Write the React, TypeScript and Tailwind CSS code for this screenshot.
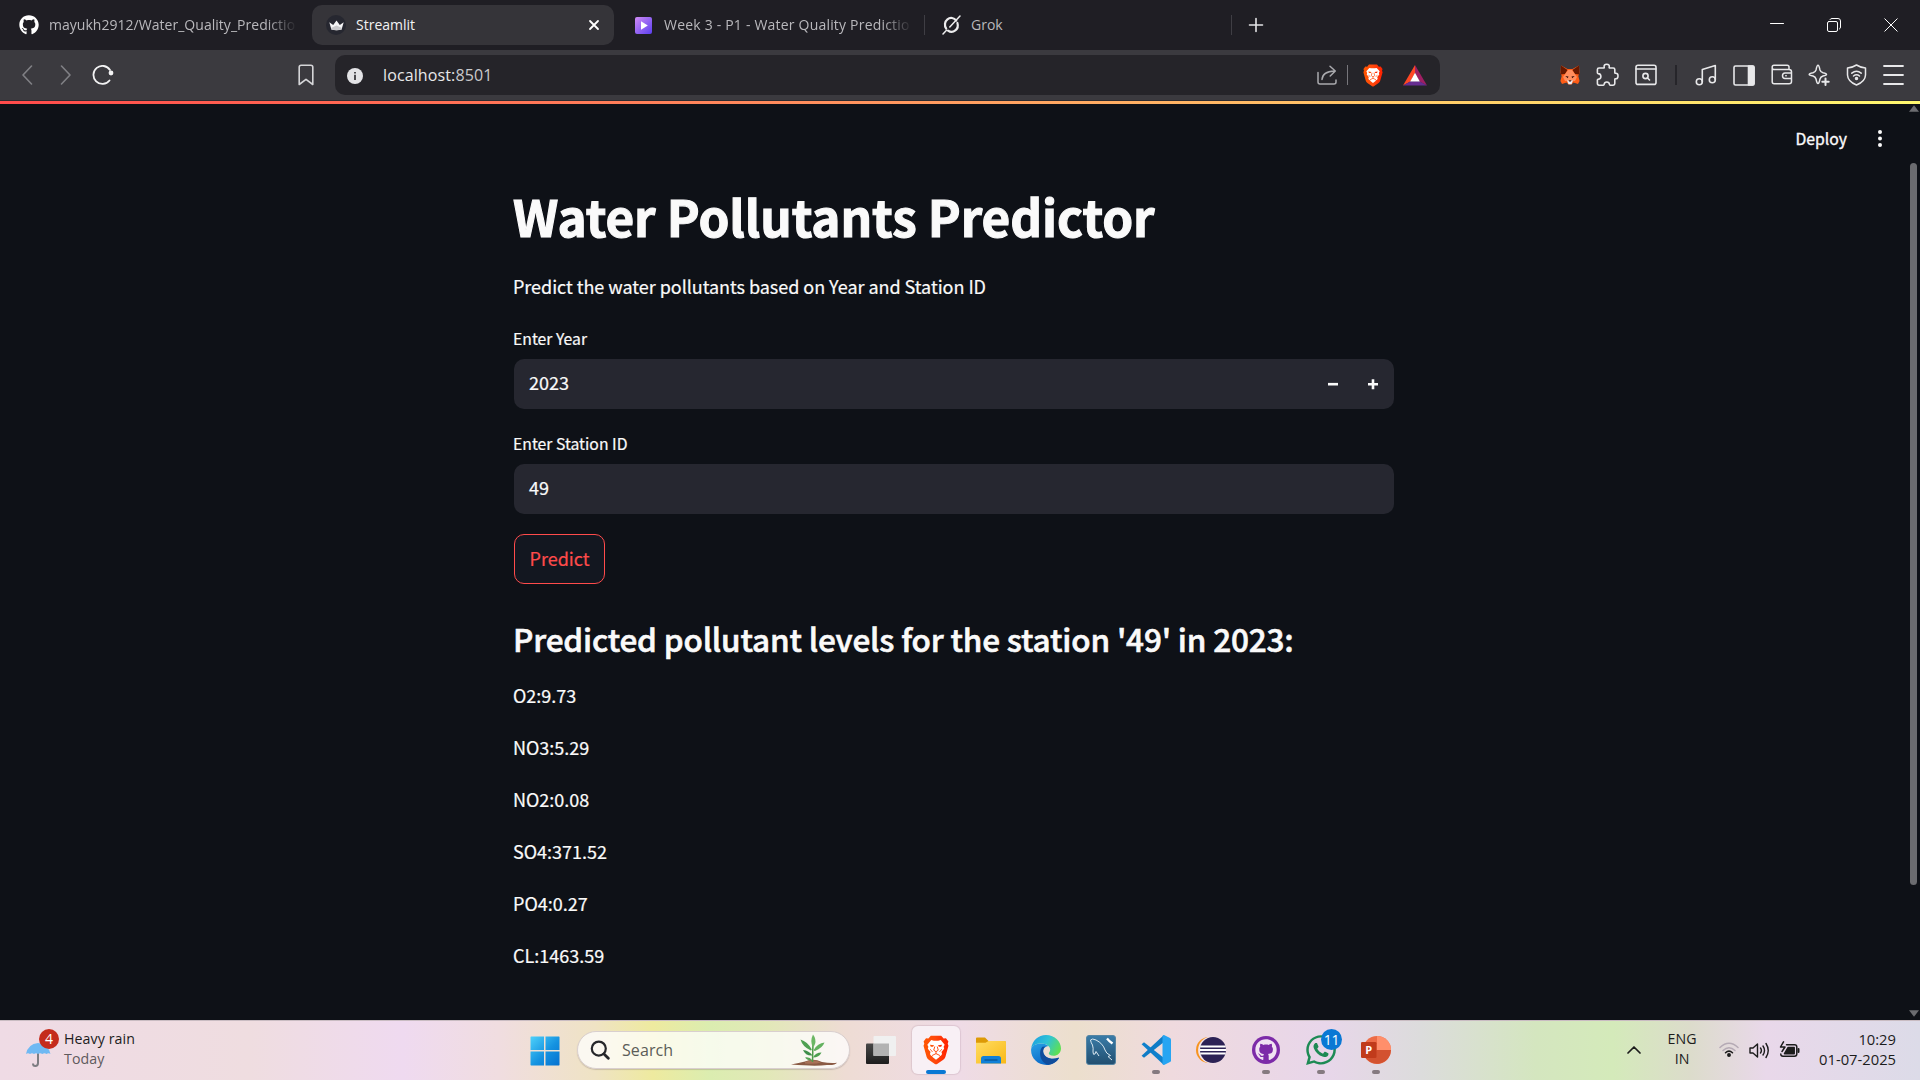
import React from "react";
import { FaGithub, FaWhatsapp } from "react-icons/fa";

const ui = "font-['Open_Sans','Noto_Sans',sans-serif]";

const Line = ({
  w = 24,
  h = 24,
  box,
  sw = 1.6,
  className = "",
  children,
}: {
  w?: number;
  h?: number;
  box?: string;
  sw?: number;
  className?: string;
  children: React.ReactNode;
}) => (
  <svg
    width={w}
    height={h}
    viewBox={box ?? `0 0 ${w} ${h}`}
    fill="none"
    stroke="currentColor"
    strokeWidth={sw}
    strokeLinecap="round"
    strokeLinejoin="round"
    className={`block shrink-0 ${className}`}
  >
    {children}
  </svg>
);

function TabStrip() {
  return (
    <div className={`flex h-[50px] items-center bg-[#1f1e24] text-[14px] text-[#b9b8bc] ${ui}`}>
      <div className="flex w-[312px] items-center pl-[19px]">
        <FaGithub className="size-[20px] shrink-0 text-white" />
        <div className="ml-[10px] w-[248px] whitespace-nowrap pb-[2px] tracking-[0.03px] [mask-image:linear-gradient(to_right,black_88%,transparent)]">
          mayukh2912/Water_Quality_Predictio
        </div>
      </div>
      <div className="flex h-10 w-[302px] items-center rounded-[10px] bg-[#353439] pl-[14px] pr-[13px] text-[#f2f2f3]">
        <div className="flex size-5 shrink-0 items-center justify-center rounded-full bg-[#262730]">
          <svg width="15" height="11" viewBox="0 0 15 11" className="block">
            <path d="M0.3 2.2 4.2 5 7.5 0.5 10.8 5 14.7 2.2 12.6 9.6Q7.5 11 2.4 9.6Z" fill="#f4f4f5" />
            <path d="M2 8 7.5 5.5 13 8 12.6 9.6Q7.5 11 2.4 9.6Z" fill="#c9c9cc" />
          </svg>
        </div>
        <div className="ml-[10px] flex-1 pb-[2px]">Streamlit</div>
        <Line w={14} h={14} sw={1.8} className="text-white">
          <path d="M3 3 11 11M11 3 3 11" />
        </Line>
      </div>
      <div className="flex w-[310px] items-center pl-[21px]">
        <svg width="17" height="17" viewBox="0 0 17 17" className="block shrink-0">
          <defs>
            <linearGradient id="play" x1="0" y1="0" x2="1" y2="1">
              <stop offset="0" stopColor="#d08bf5" />
              <stop offset="1" stopColor="#5b3ff0" />
            </linearGradient>
          </defs>
          <rect width="17" height="17" rx="2" fill="url(#play)" />
          <path d="M6 4.3 12.8 8.5 6 12.7Z" fill="#fff" />
        </svg>
        <div className="ml-[12px] w-[248px] whitespace-nowrap pb-[2px] tracking-[0.2px] [mask-image:linear-gradient(to_right,black_88%,transparent)]">
          Week 3 - P1 - Water Quality Predictio
        </div>
      </div>
      <div className="flex h-5 w-[308px] items-center border-x border-[#3f3e44] pl-[17px]">
        <Line w={19} h={20} sw={2.2} className="text-[#ececed]">
          <path d="M14.2 5.6A6.2 6.6 0 0 0 4.2 13.6M15.4 8A6.2 6.6 0 0 1 6 15.6" />
          <path d="M7.8 12 18 1M4.5 15.2 1 19" strokeWidth="1.5" />
        </Line>
        <span className="ml-[10px] pb-[2px]">Grok</span>
      </div>
      <Line w={16} h={16} className="ml-[16px] text-[#e4e4e6]">
        <path d="M8 1.5V14.5M1.5 8H14.5" />
      </Line>
      <div className="ml-auto flex items-center gap-[43px] pr-[22px] text-white">
        <Line w={14} h={14} sw={1}>
          <path d="M0.5 5.5H13.5" />
        </Line>
        <Line w={14} h={14} sw={1}>
          <rect x="0.5" y="3.5" width="10" height="10" rx="1.5" />
          <path d="M3 1.5Q3.5 .5 5 .5H11Q13.5 .5 13.5 3V9Q13.5 10.5 12.5 11" />
        </Line>
        <Line w={14} h={14} sw={1}>
          <path d="M0.8 0.8 13.2 13.2M13.2 0.8 0.8 13.2" />
        </Line>
      </div>
    </div>
  );
}

const MetaMask = () => (
  <svg width="20" height="20" viewBox="0 0 20 20" className="block shrink-0">
    <path d="M1 .5 7.5 4H12.5L19 .5 19.5 8 18.3 11 19.6 16 18 19 13.5 17.5 11.5 19.5H8.5L6.5 17.5 2 19 0.4 16 1.7 11 0.5 8Z" fill="#ff5c16" />
    <path d="M1 .5 7.5 5 5 9 0.5 9.5ZM19 .5 12.5 5 15 9 19.5 9.5Z" fill="#661800" />
    <path d="M5 9.2 8 5H12L15 9.2 17 12 15 16H5L3 12Z" fill="#ff8d5d" />
    <path d="M7 15.5 8.5 19.2H11.5L13 15.5Z" fill="#e9edf5" />
    <path d="M5.3 11 8.5 11.6 7.8 13.2ZM14.7 11 11.5 11.6 12.2 13.2ZM8.6 15.2H11.4L11 16.6H9Z" fill="#3b1008" />
  </svg>
);

const BraveLion = ({ className }: { className: string }) => (
  <svg viewBox="0 0 30 34" className={`block shrink-0 ${className}`}>
    <defs>
      <linearGradient id="lion" x1="0" y1="0" x2="1" y2="0">
        <stop offset="0" stopColor="#ff5500" />
        <stop offset="0.45" stopColor="#ff4a0c" />
        <stop offset="1" stopColor="#ff2000" />
      </linearGradient>
    </defs>
    <path d="M9 0.5H21L23.8 3.7 26.5 3.4 29.3 7.2 28.5 9.8 29.4 12 25.8 25 Q25.2 27 23.4 28.2L16.3 33.1Q15 34 13.7 33.1L6.6 28.2Q4.8 27 4.2 25L.6 12 1.5 9.8.7 7.2 3.5 3.4 6.2 3.7Z" fill="url(#lion)" />
    <path d="M9.5 5.6 12.5 6.3H17.5L20.5 5.6 25 10.8 23.8 13.2 24.4 15.5 21.3 19.3 22 21.7 20.5 24 18.8 23.4 19.4 24.8 15 28.2 10.6 24.8 11.2 23.4 9.5 24 8 21.7 8.7 19.3 5.6 15.5 6.2 13.2 5 10.8Z" fill="#fff" />
    <path d="M8 11 12.8 11.6 11.6 13.2 9 13.2ZM22 11 17.2 11.6 18.4 13.2 21 13.2Z" fill="url(#lion)" />
    <path d="M13.6 13 12.4 17.2 15 19 17.6 17.2 16.4 13" fill="none" stroke="#ff4a0c" strokeWidth="1.1" />
    <path d="M15 19V21.3M10.6 23.3 15 21.2 19.4 23.3" fill="none" stroke="#ff4a0c" strokeWidth="1.1" />
    <path d="M8.3 16 11 19.3M21.7 16 19 19.3" fill="none" stroke="#ff4a0c" strokeWidth="0.9" />
  </svg>
);

function Toolbar() {
  return (
    <div className="flex h-[51px] items-center border-b border-[#2d2c31] bg-[#3b3a3f] text-[#e8e8ea]">
      <Line w={12} h={20} className="ml-[21px] text-[#808085]">
        <path d="M10.5 1 2 10 10.5 19" />
      </Line>
      <Line w={12} h={20} className="ml-[27px] text-[#808085]">
        <path d="M1.5 1 10 10 1.5 19" />
      </Line>
      <Line w={22} h={20} sw={1.8} className="ml-[20px] text-[#f2f2f3]">
        <path d="M17.5 15.5A9 9 0 1 1 18 5" />
        <circle cx="19" cy="8" r="2.4" fill="currentColor" stroke="none" />
      </Line>
      <Line w={16} h={22} className="ml-[184px] text-[#d5d5d8]">
        <path d="M1.2 3.2Q1.2 1.2 3.2 1.2H12.8Q14.8 1.2 14.8 3.2V20.5L8 15.3 1.2 20.5Z" />
      </Line>
      <div className="ml-[21px] flex h-10 w-[1105px] items-center rounded-[10px] bg-[#252429] pl-[12px] pr-[13px]">
        <div className="mt-px flex size-4 items-center justify-center rounded-full bg-[#e3e3e6]">
          <svg width="16" height="16" viewBox="0 0 16 16">
            <path d="M7.2 6.8H8.8V12H7.2ZM7.2 4H8.8V5.6H7.2Z" fill="#252429" />
          </svg>
        </div>
        <span className={`ml-5 flex-1 text-[16px] tracking-[0.12px] text-[#e8e8ea] ${ui}`}>
          localhost:<span className="text-[#c9c9cc]">8501</span>
        </span>
        <Line w={20} h={20} sw={1.5} className="text-[#a9a9ad]">
          <path d="M1 7.5V17Q1 19 3 19H17Q19 19 19 17V15M5 14.5Q5.5 6.5 17.5 6M13 1.2 18.3 6 13.2 11" />
        </Line>
        <div className="ml-[10px] h-5 w-px bg-[#77767b]" />
        <BraveLion className="ml-[15px] h-[23px] w-[20px]" />
        <svg width="24" height="21" viewBox="0 0 24 21" className="ml-5 block shrink-0">
          <path d="M12 0 0 20.5 7.5 16.5 12 8Z" fill="#ff4724" />
          <path d="M12 0 24 20.5 16.5 16.5 12 8Z" fill="#9e1f63" />
          <path d="M0 20.5H24L16.5 16.2H7.5Z" fill="#662d91" />
          <path d="M12 7.8 16.8 16.5H7.2Z" fill="#fff" />
        </svg>
      </div>
      <div className="ml-[120px] flex w-[97px] items-center justify-between">
        <MetaMask />
        <Line w={23} h={24} sw={1.6} className="-mt-px">
          <path d="M3 5H7.7Q8.4 5 8.2 4.3 7.6 1.2 10.7 1.2 13.8 1.2 13.2 4.3 13 5 13.7 5H17.2Q18.8 5 18.8 6.6V9.6Q18.8 10.4 19.6 10.3 22 10.1 22 13 22 15.9 19.6 15.7 18.8 15.6 18.8 16.4V20.6Q18.8 22.2 17.2 22.2H14.2Q13.6 22.2 13.5 21.5 13.2 19 10.8 19 8.4 19 8.1 21.5 8 22.2 7.4 22.2H3Q1.4 22.2 1.4 20.6V17Q1.4 16.3 2.1 16.2 4.9 15.9 4.9 13.4 4.9 10.9 2.1 10.6 1.4 10.5 1.4 9.8V6.6Q1.4 5 3 5Z" />
        </Line>
        <Line w={22} h={22} sw={1.6}>
          <rect x="1" y="1.2" width="20" height="19.2" rx="2" />
          <path d="M1 5H21" />
          <circle cx="10.5" cy="12" r="2.6" />
          <path d="M12.5 14 14.5 16" />
        </Line>
      </div>
      <div className="ml-[18px] h-5 w-[2px] bg-[#26252a]" />
      <div className="ml-[18px] flex w-[209px] items-center justify-between">
        <Line w={22} h={22}>
          <circle cx="4.3" cy="17.8" r="3" />
          <circle cx="17.3" cy="15.8" r="3" />
          <path d="M7.3 17.8V5.5L20.3 1.5V15.5" />
        </Line>
        <Line w={22} h={21}>
          <rect x="1" y="1" width="20" height="19" rx="1.5" />
          <path d="M15.5 1H19.5Q21 1 21 2.5V18.5Q21 20 19.5 20H15.5Z" fill="currentColor" />
        </Line>
        <Line w={22} h={22} sw={1.5}>
          <path d="M18 5.5V3Q18 1.2 16.2 1.2H3Q1.2 1.2 1.2 3V17.8Q1.2 19.8 3.2 19.8H18Q20.5 19.8 20.5 17.5V7.8Q20.5 5.5 18 5.5H3Q1.2 5.5 1.2 3.5M20.5 9H14Q11.5 9 11.5 11.8 11.5 14.5 14 14.5H20.5M14.8 11.8H15.2" />
        </Line>
        <Line w={22} h={22} sw={1.5}>
          <path d="M10 1.2Q11 1.2 12 6 12.6 8 15 8.8 18.5 9.6 18.5 10.4 18.5 11.2 15 12 12.6 12.8 12 15 11 19.6 10 19.6 9 19.6 8 15 7.4 12.8 5 12 1.2 11.2 1.2 10.4 1.2 9.6 5 8.8 7.4 8 8 6 9 1.2 10 1.2Z" />
          <path d="M17.5 14.5V21M14.3 17.8H20.7" strokeWidth="2" />
        </Line>
        <Line w={21} h={22} sw={1.5}>
          <path d="M10.5 1 Q15 3.8 19.5 4V11Q19.3 17.5 10.5 21 1.7 17.5 1.5 11V4Q6 3.8 10.5 1Z" />
          <path d="M5.8 9.2Q10.5 5.3 15.2 9.2M7.5 12Q10.5 9.5 13.5 12" />
          <circle cx="10.5" cy="14.5" r="1" fill="currentColor" />
        </Line>
        <Line w={21} h={20} sw={1.8}>
          <path d="M1 1H20M1 10H20M1 19H20" />
        </Line>
      </div>
    </div>
  );
}

const results = ["O2:9.73", "NO3:5.29", "NO2:0.08", "SO4:371.52", "PO4:0.27", "CL:1463.59"];

function Page() {
  return (
    <div className="flex h-[919px] flex-col bg-[#0e1117] font-['Noto_Sans_CJK_SC',sans-serif] text-[#fafafa]">
      <div className="h-[3px] shrink-0 bg-[linear-gradient(90deg,#ff4b4b,#ff8a5c_40%,#ffbd66_66%,#fff96f)]" />
      <div className="flex flex-1">
        <div className="w-[513px]" />
        <main className="flex w-[881px] flex-col items-start pl-px">
          <h1 className="-ml-px mt-[82px] h-[60px] text-[49.5px] font-bold leading-[60px] tracking-[-0.1px] whitespace-nowrap [-webkit-text-stroke:1.1px_#fafafa]">
            Water Pollutants Predictor
          </h1>
          <p className="-ml-px mt-[25px] h-[30px] text-[18px] leading-[30px] tracking-[-0.04px] [-webkit-text-stroke:0.2px_#fafafa]">
            Predict the water pollutants based on Year and Station ID
          </p>
          <label className="-ml-px mt-[26px] h-6 text-[15.75px] leading-6 [-webkit-text-stroke:0.2px_#fafafa]">Enter Year</label>
          <div className="mt-[8px] flex h-[50px] w-full items-center rounded-[10px] bg-[#262730] pl-[15px] pr-[15px] text-[18px]">
            <span className="-mt-[3px] flex-1 [-webkit-text-stroke:0.2px_#fafafa]">2023</span>
            <svg width="12" height="12" viewBox="0 0 12 12" className="mr-7">
              <path d="M1 6.2H11" stroke="#fafafa" strokeWidth="2.6" />
            </svg>
            <svg width="12" height="12" viewBox="0 0 12 12">
              <path d="M1 6.2H11M6 1.2V11.2" stroke="#fafafa" strokeWidth="2.6" />
            </svg>
          </div>
          <label className="-ml-px mt-[23px] h-6 text-[15.75px] leading-6 [-webkit-text-stroke:0.2px_#fafafa]">Enter Station ID</label>
          <div className="mt-[8px] flex h-[50px] w-full items-center rounded-[10px] bg-[#262730] px-[15px] text-[18px]">
            <span className="-mt-[3px] [-webkit-text-stroke:0.2px_#fafafa]">49</span>
          </div>
          <button className="mt-5 flex h-[50px] w-[91px] items-center justify-center rounded-[10px] border border-[#ff4b4b] bg-[#131720] pb-[2px] text-[18px] text-[#ff4b4b] [-webkit-text-stroke:0.2px_#ff4b4b]">
            Predict
          </button>
          <h2 className="-ml-px mt-8 h-11 text-[31.5px] font-medium leading-[44px] tracking-[-0.16px] whitespace-nowrap [-webkit-text-stroke:0.6px_#fafafa]">
            Predicted pollutant levels for the station '49' in 2023:
          </h2>
          <div className="-ml-px mt-5 flex flex-col gap-[22px] text-[18px] leading-[30px] [-webkit-text-stroke:0.2px_#fafafa]">
            {results.map((r) => (
              <p key={r}>{r}</p>
            ))}
          </div>
        </main>
        <div className="flex flex-1 items-start justify-end pr-[24px] pt-[20px]">
          <span className="text-[15.75px] leading-[30px] [-webkit-text-stroke:0.35px_#fafafa]">Deploy</span>
          <svg width="6" height="20" viewBox="0 0 6 20" className="ml-[30px] mt-[5px]">
            <circle cx="3" cy="3" r="2" fill="#fafafa" />
            <circle cx="3" cy="9.5" r="2" fill="#fafafa" />
            <circle cx="3" cy="16" r="2" fill="#fafafa" />
          </svg>
        </div>
        <div className="flex w-[13px] flex-col items-center">
          <svg width="10" height="7" viewBox="0 0 9 6" className="mt-[1px]">
            <path d="M4.5 0 9 6H0Z" fill="#6b6c70" />
          </svg>
          <div className="mt-[51px] h-[722px] w-[7px] rounded-full bg-[#6b6c70]" />
          <svg width="10" height="7" viewBox="0 0 9 6" className="mb-[3px] mt-auto">
            <path d="M0 0H9L4.5 6Z" fill="#6b6c70" />
          </svg>
        </div>
      </div>
    </div>
  );
}

function Slot({ children, running = false, active = false }: { children: React.ReactNode; running?: boolean; active?: boolean }) {
  return (
    <div className="flex w-[55px] justify-center">
      <div
        className={`relative flex h-12 w-12 items-center justify-center rounded-md ${
          active ? "bg-[#f8f0f5] shadow-[0_0_1px_1px_rgba(120,90,110,0.15)]" : ""
        }`}
      >
        {children}
        {active && <div className="absolute bottom-0 h-1 w-5 rounded-full bg-[#0a78d4]" />}
        {running && <div className="absolute bottom-0 h-1 w-2 rounded-full bg-[#857a80]" />}
      </div>
    </div>
  );
}

const Windows = () => (
  <svg width="30" height="30" viewBox="0 0 30 30">
    <defs>
      <linearGradient id="win" x1="0" y1="0" x2="30" y2="30" gradientUnits="userSpaceOnUse">
        <stop offset="0" stopColor="#4fd3fb" />
        <stop offset="0.55" stopColor="#1592e0" />
        <stop offset="1" stopColor="#0570cf" />
      </linearGradient>
    </defs>
    <path d="M1 0.5H14V14H0.5V1ZM15.5 .5H29L29.5 1V14H15.5ZM.5 15.5H14V29.5H1L.5 29ZM15.5 15.5H29.5V29L29 29.5H15.5Z" fill="url(#win)" />
  </svg>
);

const Plant = () => (
  <svg width="48" height="33" viewBox="0 0 48 33">
    <path d="M0 30.5Q8 29 14 27.5 22 24 31 28 39 29.5 46 28.8 44 31.5 36 31 24 32.5 0 30.5Z" fill="#8a5a44" />
    <path d="M14 28Q22 24.5 30 28.5 24 30.5 14 29.5Z" fill="#a87258" />
    <path d="M21.5 28 22 8" stroke="#4e9a4a" strokeWidth="1.5" />
    <path d="M22 0.5Q25.5 5 24 10 23 13 21.8 13 18.8 7 22 .5Z" fill="#6cb765" />
    <path d="M9.5 5.5Q16.5 7.5 20.8 15.5 20 17 19 16 11.5 12.5 9.5 5.5Z" fill="#4fa152" />
    <path d="M33.5 8.5Q31.5 14 24 17 22.5 17 23 15.5 26.5 9.5 33.5 8.5Z" fill="#63b15f" />
    <path d="M12 16Q18 16.5 21.5 21.5 14.5 22 12 16Z" fill="#3d8f49" />
    <path d="M30.5 18.5Q28 23.5 22 23.5 24.5 18.5 30.5 18.5Z" fill="#4b9f4f" />
    <path d="M14 23.5Q18.5 22.5 21.5 26.5 16.5 27 14 23.5Z" fill="#57a657" />
  </svg>
);

const Folder = () => (
  <svg width="30" height="27" viewBox="0 0 30 27">
    <defs>
      <linearGradient id="fold" x1="0" y1="0" x2="1" y2="1">
        <stop offset="0" stopColor="#ffdc62" />
        <stop offset="1" stopColor="#f9b916" />
      </linearGradient>
    </defs>
    <path d="M0 1.5Q0 .5 1 .5H9L12.5 4H28.5Q30 4 30 5.5V10H0Z" fill="#dd9a05" />
    <path d="M0 5.8H9.5L12.5 4H28.5Q30 4 30 5.5V26.5H0Z" fill="url(#fold)" />
    <path d="M5 26.5V21.5Q5 19 7.5 19H22.5Q25 19 25 21.5V26.5Z" fill="#1180d8" />
    <path d="M8.5 23H21.5" stroke="#07508f" strokeWidth="1.2" />
  </svg>
);

const Edge = () => (
  <svg width="30" height="30" viewBox="0 0 30 30">
    <defs>
      <linearGradient id="eg1" x1="0" y1="0.2" x2="1" y2="0.6">
        <stop offset="0" stopColor="#1d9fe0" />
        <stop offset="0.5" stopColor="#2fc3d6" />
        <stop offset="1" stopColor="#5fe052" />
      </linearGradient>
      <linearGradient id="eg2" x1="0" y1="0" x2="0.6" y2="1">
        <stop offset="0" stopColor="#2aa2e6" />
        <stop offset="1" stopColor="#0763c4" />
      </linearGradient>
    </defs>
    <path d="M.1 14.5C.4 10.5 5 8.3 10.5 8.5 13.5 8.6 16 9.5 17.5 11.2 14 11 11.8 14 12.2 17 13 22.5 20.5 25.5 27.2 22.8 27.8 22.6 28.1 23 27.7 23.5 25 27.5 20.5 30 15.5 30 6.5 30-.4 23 .1 14.5Z" fill="url(#eg2)" />
    <path d="M11.5 11.8C7.5 15.5 8 27.5 17.5 29.8 22.5 29.2 25.8 26.7 27.7 23.5 28.1 23 27.8 22.6 27.2 22.8 20.5 25.5 13 22.5 12.2 17 11.9 15 12.8 12.6 14.5 11.6Z" fill="#0f4c9c" />
    <path d="M.1 14C1 5.5 7.5 0 15 0 24 0 30 6.5 30 13.5 30 18 26.5 20.8 22.5 20.8 19.5 20.8 17.8 19.5 17.8 18.5 17.8 17.5 19.2 17 19.2 14.6 19.2 11.5 15.5 8.5 10.5 8.5 5.5 8.5.8 10.5.1 14Z" fill="url(#eg1)" />
  </svg>
);

const Dolphin = () => (
  <svg width="30" height="30" viewBox="0 0 30 30">
    <defs>
      <linearGradient id="wb" x1="0" y1="0" x2="0" y2="1">
        <stop offset="0" stopColor="#3a7ca8" />
        <stop offset="1" stopColor="#224f70" />
      </linearGradient>
    </defs>
    <rect x="0.5" y="0.5" width="29" height="29" rx="2.5" fill="url(#wb)" stroke="#5585a3" />
    <path d="M4.5 5Q6 3 10 5 17 8.5 19 15 20 18.5 24.5 20.5L22 21.5 26 25M4.5 5Q5 8 6.5 10 7.5 13 7 17 7 20.5 9 19L10 16.5 13 21" fill="none" stroke="#dbe8f0" strokeWidth="1" />
    <path d="M21 3.5 23.5 6.2 26.5 8.5" fill="none" stroke="#fff" strokeWidth="2.4" />
  </svg>
);

const VsCode = () => (
  <svg width="30" height="30" viewBox="0 0 30 30">
    <path d="M.6 9.3 3 7.3 23 23V29.8L21.8 29Z" fill="#0f80cc" />
    <path d="M.6 20.7 3 22.7 23 7V.2L21.8 1Z" fill="#0f7cc6" />
    <path d="M21.5 .8 23 0 29 2.9Q30 3.5 30 4.5V25.5Q30 26.5 29 27.1L23 30 21.5 29.2Z" fill="#27a5f2" />
  </svg>
);

const Eclipse = () => (
  <svg width="30" height="28" viewBox="0 0 30 28">
    <circle cx="13" cy="14" r="13" fill="#f79420" />
    <circle cx="15.7" cy="14" r="13.6" fill="#f3e4ea" />
    <circle cx="17" cy="14" r="13" fill="#2c2255" />
    <path d="M4.2 10.5H29.7M4 14H30M4.2 17.5H29.7" stroke="#fff" strokeWidth="1.8" />
  </svg>
);

const PowerPoint = () => (
  <svg width="30" height="28" viewBox="0 0 30 28">
    <circle cx="16" cy="14" r="14" fill="#ed6c47" />
    <path d="M16 0A14 14 0 0 1 30 14H16Z" fill="#ff8f6b" />
    <path d="M30 14A14 14 0 0 1 3 19L16 14Z" fill="#d35230" />
    <rect x="0" y="6" width="15.5" height="16" rx="1.3" fill="#c13b1b" />
    <text x="7.8" y="18" textAnchor="middle" fontSize="11" fontWeight="700" fontFamily="Open Sans" fill="#fff">
      P
    </text>
  </svg>
);

function Taskbar() {
  return (
    <div
      className={`flex h-[60px] items-center border-t border-[#c9bcc2] bg-[linear-gradient(90deg,#efdbe5_0%,#efdde0_13%,#efdaf0_21%,#f0dde0_26%,#efe3c4_31%,#eeea9f_34%,#dbedb0_37%,#e2e8b8_40%,#eedcd4_44%,#efdbe6_50%,#ecdfcd_56%,#efdade_61%,#e8d6ea_69%,#dcdcdc_74%,#d4e6bf_80%,#d4eaba_84%,#dcdccb_88%,#e9d8ea_92%,#dcdbe8_100%)] text-[#1c1c1c] ${ui}`}
    >
      <div className="flex w-[517px] items-center pl-[26px]">
        <div className="relative h-[38px] w-[33px]">
          <svg width="26" height="24" viewBox="0 0 26 24" className="absolute left-0 top-[11px]">
            <path d="M12 9V20Q12 23 9.3 23 7 23 7 20.5" fill="none" stroke="#7d7d82" strokeWidth="2" />
            <path d="M0 11Q2 1 12 0 22 1 24.5 11 22.5 9.5 20.5 11 18.5 9.5 16.3 11 14 9.5 12 11 10 9.5 8 11 6 9.5 4 11 2 9.5 0 11Z" fill="#6fb9f3" />
          </svg>
          <div className="absolute left-[13px] -top-[3px] flex size-[20px] items-center justify-center rounded-full bg-[#c42b1c] text-[14px] text-white">
            4
          </div>
        </div>
        <div className="ml-[5px] -mt-[3px] text-[14.2px] leading-5 tracking-[0.08px]">
          <div>Heavy rain</div>
          <div className="text-[#5f5a5d]">Today</div>
        </div>
      </div>
      <Slot>
        <Windows />
      </Slot>
      <div className="-mt-px ml-[5px] flex h-[38px] w-[273px] items-center rounded-full border border-[#d9cfcf] bg-white/75 pl-[12px] pr-[10px] shadow-[0_1px_1px_rgba(90,80,80,0.25)]">
        <Line w={20} h={20} sw={2.2} className="text-[#26272a]">
          <circle cx="8.8" cy="8.6" r="7" />
          <path d="M14 14 18.3 18.2" strokeWidth="2.8" />
        </Line>
        <span className="ml-[12px] flex-1 text-[16px] tracking-[0.1px] text-[#5c5d58]">Search</span>
        <Plant />
      </div>
      <div className="-mt-px ml-[3.5px] flex">
        <Slot>
          <svg width="30" height="28" viewBox="0 0 30 28">
            <defs>
              <linearGradient id="tv" x1="0" y1="0" x2="0" y2="1">
                <stop offset="0" stopColor="#474747" />
                <stop offset="1" stopColor="#1d1d1d" />
              </linearGradient>
            </defs>
            <rect x="0" y="7.5" width="23" height="20.5" rx="1" fill="url(#tv)" />
            <rect x="7.5" y="0" width="22.5" height="20" rx="1" fill="#f0f0f0" />
            <rect x="7.5" y="7.5" width="15.5" height="12.5" fill="#b2b2b2" />
          </svg>
        </Slot>
        <Slot active>
          <BraveLion className="h-[30px] w-[26px]" />
        </Slot>
        <Slot>
          <Folder />
        </Slot>
        <Slot>
          <Edge />
        </Slot>
        <Slot>
          <Dolphin />
        </Slot>
        <Slot running>
          <VsCode />
        </Slot>
        <Slot>
          <Eclipse />
        </Slot>
        <Slot running>
          <div className="flex size-7 items-center justify-center rounded-full bg-[#7c2ba8]">
            <FaGithub className="size-[22px] text-[#f0e2f2]" />
          </div>
        </Slot>
        <Slot running>
          <FaWhatsapp className="size-[34px] text-[#1d8a54]" />
          <div className="absolute left-6 top-[3px] flex size-[21px] items-center justify-center rounded-full bg-[#0a78d4] text-[14px] tracking-tight text-white">
            11
          </div>
        </Slot>
        <Slot running>
          <PowerPoint />
        </Slot>
      </div>
      <div className="-mt-[3px] ml-auto flex items-center pr-[24px] text-[14.75px] leading-5">
        <Line w={14} h={8} sw={1.7} className="mt-[2px]">
          <path d="M1 7 7 1 13 7" />
        </Line>
        <div className="ml-[26px] w-[30px] text-center text-[14.2px]">
          <div>ENG</div>
          <div>IN</div>
        </div>
        <Line w={20} h={15} sw={1.5} className="ml-[22px]">
          <path d="M1 5.5Q10-3 19 5.5" stroke="#b5aab5" />
          <path d="M4 8.5Q10 3 16 8.5" stroke="#b5aab5" />
          <path d="M6.5 10.8Q10 7.5 13.5 10.8" />
          <circle cx="10" cy="13" r="1.2" fill="currentColor" />
        </Line>
        <Line w={21} h={17} sw={1.4} className="ml-[10px] mt-[2px]">
          <path d="M1 6V11H4L8.5 15V2L4 6ZM11.5 6Q13.3 8.5 11.5 11M14 4Q17 8.5 14 13M17 1.5Q21.5 8.5 17 15.5" />
        </Line>
        <Line w={21} h={17} sw={1.5} className="ml-[9px]">
          <path d="M7.5 3.8H15.5Q17.8 3.8 17.8 6V13Q17.8 15.2 15.5 15.2H4Q1.8 15.2 1.8 13" />
          <path d="M9 6.5H15.2V12.7H5.5Z" fill="currentColor" />
          <path d="M19.5 8V11" strokeWidth="2" />
          <path d="M4.5 .8 1.5 6H6L3 10.5" strokeWidth="1.5" />
        </Line>
        <div className="ml-[19px] text-right">
          <div>10:29</div>
          <div>01-07-2025</div>
        </div>
      </div>
    </div>
  );
}

export default function App() {
  return (
    <div className="flex h-[1080px] w-[1920px] flex-col overflow-hidden">
      <TabStrip />
      <Toolbar />
      <Page />
      <Taskbar />
    </div>
  );
}
